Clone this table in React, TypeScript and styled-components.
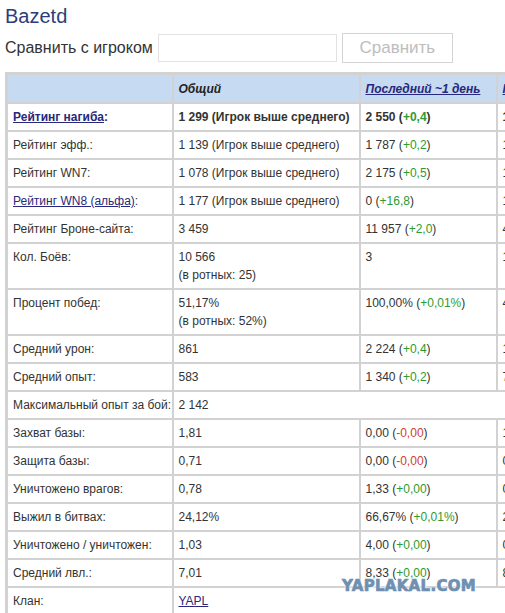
import React from 'react';
import styled, { createGlobalStyle } from 'styled-components';

const GlobalStyle = createGlobalStyle`
  html, body {
    margin: 0;
    padding: 0;
    overflow: hidden;
    background: #fff;
  }
  body {
    font-family: "Liberation Sans", Arial, sans-serif;
    color: #333;
  }
`;

const Page = styled.div`
  padding: 3px 0 0 5px;
  width: 700px;
`;

const Title = styled.h1`
  margin: 0;
  font-size: 20px;
  line-height: 26px;
  font-weight: normal;
  color: #2c3d7c;
`;

const CompareForm = styled.div`
  display: flex;
  align-items: center;
  margin-top: 4px;
  height: 30px;
`;

const CompareLabel = styled.span`
  font-size: 16px;
  color: #333;
  margin-right: 5px;
`;

const CompareInput = styled.input`
  box-sizing: border-box;
  width: 179px;
  height: 28px;
  border: 1px solid #e2e2e2;
  margin: 0;
  padding: 0 4px;
`;

const CompareButton = styled.button`
  box-sizing: border-box;
  width: 111px;
  height: 30px;
  margin: 0 0 0 5px;
  border: 1px solid #d4d4d4;
  background: #fff;
  font-family: "Liberation Sans", Arial, sans-serif;
  font-size: 17px;
  color: #bdbdbd;
`;

const Wrap = styled.div`
  position: relative;
  margin-top: 9px;
`;

const StatsTable = styled.table`
  border-collapse: collapse;
  table-layout: fixed;
  width: 650px;
  border: 3px solid #d2d2d2;
  font-size: 12px;
`;

const HeadCell = styled.th`
  background: #c6daf1;
  border: 2px solid #d2d2d2;
  height: 27px;
  padding: 0 5px;
  text-align: left;
  font-style: italic;
  font-weight: bold;
  color: #222;
  white-space: nowrap;
  overflow: hidden;
`;

const HeadLink = styled.a`
  color: #28287c;
  text-decoration: underline;
`;

const Cell = styled.td<{ $bold?: boolean }>`
  border: 2px solid #d2d2d2;
  padding: 6px 5px;
  line-height: 14px;
  vertical-align: top;
  white-space: nowrap;
  overflow: hidden;
  color: #333;
  font-weight: ${(p) => (p.$bold ? 'bold' : 'normal')};
`;

const CellLink = styled.a`
  color: #28287c;
  text-decoration: underline;
`;

const Note = styled.div`
  margin-top: 4px;
`;

const Delta = styled.span<{ $down?: boolean }>`
  color: ${(p) => (p.$down ? '#d0402a' : '#2f9a2f')};
`;

const Watermark = styled.div`
  position: absolute;
  left: 333px;
  bottom: 22px;
  padding: 0 4px;
  font-family: "DejaVu Sans", sans-serif;
  font-weight: bold;
  font-size: 15px;
  letter-spacing: 0.3px;
  color: #7090b2;
  -webkit-text-stroke: 0.7px #7090b2;
  text-shadow: 0 0 2px #fff, 0 0 3px #fff, 1px 1px 0 #fff;
`;

type Pair = [string, string?];

type Stat = {
  label: React.ReactNode;
  total: React.ReactNode;
  note?: string;
  day?: Pair;
  week?: Pair;
  bold?: boolean;
  span?: boolean;
};

const stats: Stat[] = [
  {
    label: (
      <>
        <CellLink href="#">Рейтинг нагиба</CellLink>:
      </>
    ),
    total: '1 299 (Игрок выше среднего)',
    day: ['2 550', '+0,4'],
    week: ['1 342', '+0,5'],
    bold: true,
  },
  { label: 'Рейтинг эфф.:', total: '1 139 (Игрок выше среднего)', day: ['1 787', '+0,2'], week: ['1 245', '+1,3'] },
  { label: 'Рейтинг WN7:', total: '1 078 (Игрок выше среднего)', day: ['2 175', '+0,5'], week: ['1 196', '+1,4'] },
  {
    label: (
      <>
        <CellLink href="#">Рейтинг WN8 (альфа)</CellLink>:
      </>
    ),
    total: '1 177 (Игрок выше среднего)',
    day: ['0', '+16,8'],
    week: ['1 302', '+1,6'],
  },
  { label: 'Рейтинг Броне-сайта:', total: '3 459', day: ['11 957', '+2,0'], week: ['4 912', '+9,1'] },
  { label: 'Кол. Боёв:', total: '10 566', note: '(в ротных: 25)', day: ['3'], week: ['14'] },
  { label: 'Процент побед:', total: '51,17%', note: '(в ротных: 52%)', day: ['100,00%', '+0,01%'], week: ['42,86%', '-0,01%'] },
  { label: 'Средний урон:', total: '861', day: ['2 224', '+0,4'], week: ['1 377', '+0,1'] },
  { label: 'Средний опыт:', total: '583', day: ['1 340', '+0,2'], week: ['703', '+0,1'] },
  { label: 'Максимальный опыт за бой:', total: '2 142', span: true },
  { label: 'Захват базы:', total: '1,81', day: ['0,00', '-0,00'], week: ['1,29', '-0,00'] },
  { label: 'Защита базы:', total: '0,71', day: ['0,00', '-0,00'], week: ['0,57', '-0,00'] },
  { label: 'Уничтожено врагов:', total: '0,78', day: ['1,33', '+0,00'], week: ['0,93', '+0,00'] },
  { label: 'Выжил в битвах:', total: '24,12%', day: ['66,67%', '+0,01%'], week: ['28,57%', '+0,01%'] },
  { label: 'Уничтожено / уничтожен:', total: '1,03', day: ['4,00', '+0,00'], week: ['0,93', '+0,00'] },
  { label: 'Средний лвл.:', total: '7,01', day: ['8,33', '+0,00'], week: ['8,07', '+0,00'] },
  { label: 'Клан:', total: <CellLink href="#">YAPL</CellLink>, span: true },
];

function Change({ value }: { value?: Pair }) {
  if (!value) return null;
  const [main, delta] = value;
  if (!delta) return <>{main}</>;
  return (
    <>
      {main} (<Delta $down={delta.startsWith('-')}>{delta}</Delta>)
    </>
  );
}

export default function App() {
  return (
    <>
      <GlobalStyle />
      <Page>
        <Title>Bazetd</Title>
        <CompareForm>
          <CompareLabel>Сравнить с игроком</CompareLabel>
          <CompareInput type="text" />
          <CompareButton type="button">Сравнить</CompareButton>
        </CompareForm>
        <Wrap>
          <StatsTable>
            <colgroup>
              <col style={{ width: 166 }} />
              <col style={{ width: 187 }} />
              <col style={{ width: 137 }} />
              <col style={{ width: 160 }} />
            </colgroup>
            <thead>
              <tr>
                <HeadCell />
                <HeadCell>Общий</HeadCell>
                <HeadCell>
                  <HeadLink href="#">Последний ~1 день</HeadLink>
                </HeadCell>
                <HeadCell>
                  <HeadLink href="#">Последние ~7 дней</HeadLink>
                </HeadCell>
              </tr>
            </thead>
            <tbody>
              {stats.map((s, i) => (
                <tr key={i}>
                  <Cell $bold={s.bold}>{s.label}</Cell>
                  <Cell $bold={s.bold} colSpan={s.span ? 3 : 1}>
                    {s.total}
                    {s.note && <Note>{s.note}</Note>}
                  </Cell>
                  {!s.span && (
                    <>
                      <Cell $bold={s.bold}>
                        <Change value={s.day} />
                      </Cell>
                      <Cell $bold={s.bold}>
                        <Change value={s.week} />
                      </Cell>
                    </>
                  )}
                </tr>
              ))}
            </tbody>
          </StatsTable>
          <Watermark>YAPLAKAL.COM</Watermark>
        </Wrap>
      </Page>
    </>
  );
}
